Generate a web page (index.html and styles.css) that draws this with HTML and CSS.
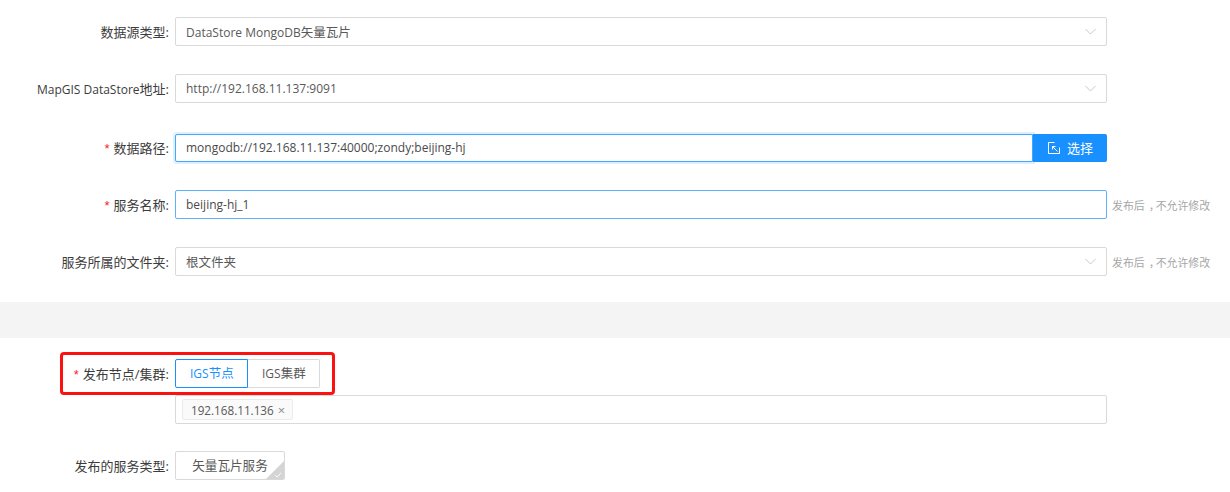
FILE: index.html
```html
<!DOCTYPE html>
<html lang="zh-CN">
<head>
<meta charset="utf-8">
<title>发布服务</title>
<link rel="stylesheet" href="styles.css">
</head>
<body>
<section class="panel panel-top">
  <div class="row row-a">
    <label class="lbl">数据源类型:</label>
    <div class="field select"><span><span class="la">DataStore MongoDB</span>矢量瓦片</span><svg class="chev" viewBox="0 0 11 7"><path d="M.5 1l5 5 5-5" /></svg></div>
  </div>
  <div class="row row-b">
    <label class="lbl"><span class="la">MapGIS DataStore</span>地址:</label>
    <div class="field select"><span class="la">http://192.168.11.137:9091</span><svg class="chev" viewBox="0 0 11 7"><path d="M.5 1l5 5 5-5" /></svg></div>
  </div>
  <div class="row row-c">
    <label class="lbl"><i class="req">*</i>数据路径:</label>
    <div class="group">
      <div class="field focus grow"><span class="dark la">mongodb://192.168.11.137:40000;zondy;beijing-hj</span></div>
      <button class="btn"><svg class="pick" viewBox="0 0 12 12"><path d="M6.500.5H.5v11h11V5.500M4.500 4.500l5 5M4.500 4.500v3M4.500 4.500h3" /></svg><span class="btn-text">选择</span></button>
    </div>
  </div>
  <div class="row row-d">
    <label class="lbl"><i class="req">*</i>服务名称:</label>
    <div class="field focus-plain"><span class="dark la">beijing-hj_1</span></div>
    <span class="hint">发布后<span class="comma">，</span>不允许修改</span>
  </div>
  <div class="row">
    <label class="lbl">服务所属的文件夹:</label>
    <div class="field select"><span>根文件夹</span><svg class="chev" viewBox="0 0 11 7"><path d="M.5 1l5 5 5-5" /></svg></div>
    <span class="hint">发布后<span class="comma">，</span>不允许修改</span>
  </div>
</section>
<div class="band"></div>
<section class="panel panel-bottom">
  <div class="row row-e">
    <label class="lbl"><i class="req">*</i>发布节点/集群:</label>
    <div class="radios">
      <span class="radio on"><span class="la">IGS</span>节点</span><span class="radio"><span class="la">IGS</span>集群</span>
    </div>
    <div class="mark"></div>
  </div>
  <div class="row row-f">
    <span class="lbl"></span>
    <div class="field tags"><span class="tag">192.168.11.136<b class="x">×</b></span></div>
  </div>
  <div class="row">
    <label class="lbl">发布的服务类型:</label>
    <div class="card">矢量瓦片服务<span class="corner"><svg viewBox="0 0 10 8"><path d="M1 4l3 3 5-6" /></svg></span></div>
  </div>
</section>
</body>
</html>
```
FILE: styles.css
```css
* { box-sizing: border-box; }
html, body { margin: 0; height: 492px; overflow: hidden; background: #fff; }
body { font-family: "Open Sans", "Noto Sans CJK SC", sans-serif; font-size: 13px; color: #595959; }
.la { font-size: 12px; }
.panel-top { padding-top: 17px; }
.panel-bottom { padding-top: 21px; }
.row { display: flex; align-items: center; height: 29px; margin-bottom: 28px; }
.row-b { margin-bottom: 31px; }
.row-c { margin-bottom: 27px; height: 29px; }
.row-e { margin-bottom: 7px; position: relative; }
.row-f { margin-bottom: 27px; }
.panel-top .row:last-child { margin-bottom: 26px; }
.lbl { width: 175px; flex: none; padding: 0 6px 1px 0; text-align: right; color: #3c3c3c; white-space: nowrap; }
.row-c .lbl { padding-bottom: 3px; }
.req { color: #f5222d; font-style: normal; margin-right: 4px; font-family: "Liberation Sans", sans-serif; }
.field { width: 932px; height: 29px; flex: none; display: flex; align-items: center; justify-content: space-between; padding: 0 10px 1px; border: 1px solid #d9d9d9; border-radius: 2px; background: #fff; font-size: 12.5px; }
.select span { color: #595959; }
.dark { color: #4a4a4a; }
.chev { width: 11px; height: 7px; fill: none; stroke: #c8c8c8; stroke-width: 1; }
.group { display: flex; width: 932px; height: 28px; align-self: flex-start; }
.focus { border-color: #40a9ff; box-shadow: 0 0 0 2px rgba(24,144,255,.14); border-radius: 2px 0 0 2px; }
.grow { flex: 1; width: auto; min-width: 0; height: 28px; }
.focus-plain { border-color: #5db2fb; }
.btn { width: 74px; flex: none; height: 28px; border: 0; border-radius: 0 2px 2px 0; background: #1890ff; color: #fff; font: inherit; display: flex; align-items: center; justify-content: flex-start; gap: 7px; padding: 0 0 0 15px; position: relative; }
.btn-text { padding-bottom: 2px; }
.pick { width: 12px; height: 12px; fill: none; stroke: #fff; stroke-width: 1; }
.hint { margin-left: 5px; font-size: 10.9px; color: #a6a6a6; white-space: nowrap; }
.comma { font-feature-settings: "halt"; padding: 0 1.500px 0 4px; }
.band { height: 36px; background: #f4f4f4; }
.radios { display: flex; height: 29px; font-size: 12.5px; }
.radio { height: 29px; line-height: 27px; padding: 0 14px; width: 72px; text-align: center; border: 1px solid #d9d9d9; border-left: 0; border-radius: 0 2px 2px 0; color: #595959; white-space: nowrap; }
.radio.on { width: 73px; border: 1px solid #1890ff; border-radius: 2px 0 0 2px; color: #1890ff; }
.mark { position: absolute; left: 60px; top: -7px; width: 275px; height: 43px; border: 3px solid #fc1111; border-radius: 4px; pointer-events: none; }
.tags { justify-content: flex-start; padding: 0 6px; }
.tag { display: flex; align-items: center; height: 21px; padding: 0 7px 0 8px; background: #fafafa; border: 1px solid #ececec; border-radius: 2px; color: #595959; font-size: 11.7px; }
.x { font-weight: 400; color: #8c8c8c; margin-left: 4px; font-size: 13px; }
.card { position: relative; width: 110px; height: 29px; line-height: 27px; text-align: center; border: 1px solid #d9d9d9; border-radius: 2px; color: #595959; overflow: hidden; white-space: nowrap; font-size: 12.6px; }
.corner { position: absolute; right: 0; bottom: 0; width: 0; height: 0; border-style: solid; border-width: 0 0 18px 18px; border-color: transparent transparent #d4d4d4 transparent; }
.corner svg { position: absolute; left: -10px; top: 11px; width: 8px; height: 6px; fill: none; stroke: #fff; stroke-width: 1.2; display: block; }
```
